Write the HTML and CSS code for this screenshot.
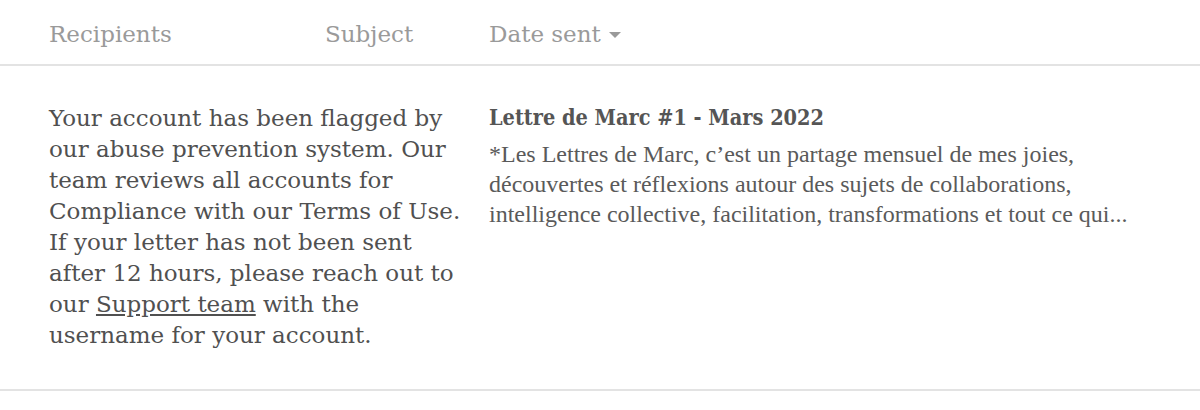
FILE: index.html
```html
<!DOCTYPE html>
<html lang="en">
<head>
    <meta charset="UTF-8">
    <meta name="viewport" content="width=device-width, initial-scale=1.0">
    <title>Letters</title>
    <link rel="stylesheet" href="styles.css">
</head>
<body>
    <div class="letters">
        <div class="letters-head">
            <div class="col-head">Recipients</div>
            <div class="col-head">Subject</div>
            <div class="col-head sortable">Date sent <span class="caret"></span></div>
        </div>
        <div class="letter-row">
            <div class="flag-note">
                Your account has been flagged by our abuse prevention system. Our team reviews all accounts for Compliance with our Terms of Use. If your letter has not been sent after 12 hours, please reach out to our <a href="#">Support team</a> with the username for your account.
            </div>
            <div class="letter-info">
                <h3 class="letter-title">Lettre de Marc #1 - Mars 2022</h3>
                <p class="letter-snippet">*Les Lettres de Marc, c’est un partage mensuel de mes joies, découvertes et réflexions autour des sujets de collaborations, intelligence collective, facilitation, transformations et tout ce qui...</p>
            </div>
        </div>
    </div>
</body>
</html>
```

FILE: styles.css
```css
body {
    margin: 0;
    padding: 0;
    background-color: #fff;
    font-family: 'DejaVu Serif', serif;
    color: #555;
}
.letters-head, .letter-row {
    display: grid;
    grid-template-columns: 276px 164px 1fr;
    padding-left: 49px;
}
.letters-head {
    height: 64px;
    align-items: center;
    border-bottom: 2px solid #e3e3e3;
}
.col-head {
    font-size: 23px;
    color: #9a9a9a;
    padding-top: 3px;
}
.sortable {
    display: flex;
    align-items: center;
    gap: 8px;
}
.caret {
    width: 0;
    height: 0;
    border-left: 6px solid transparent;
    border-right: 6px solid transparent;
    border-top: 6px solid #9a9a9a;
    margin-top: 2px;
}
.letter-row {
    padding-top: 37px;
    padding-bottom: 38px;
    border-bottom: 2px solid #e3e3e3;
}
.flag-note {
    grid-column: span 2;
    font-size: 23px;
    line-height: 31px;
    padding-right: 28px;
    color: #505050;
}
.flag-note a {
    color: inherit;
}
.letter-title {
    margin: -1px 0 5px;
    font-family: 'DejaVu Serif Condensed', 'DejaVu Serif', serif;
    font-size: 21.5px;
    font-weight: bold;
    line-height: 32px;
}
.letter-snippet {
    margin: 0;
    font-family: 'Liberation Serif', serif;
    font-size: 24px;
    line-height: 30px;
    padding-right: 50px;
    color: #5a5a5a;
}
```
